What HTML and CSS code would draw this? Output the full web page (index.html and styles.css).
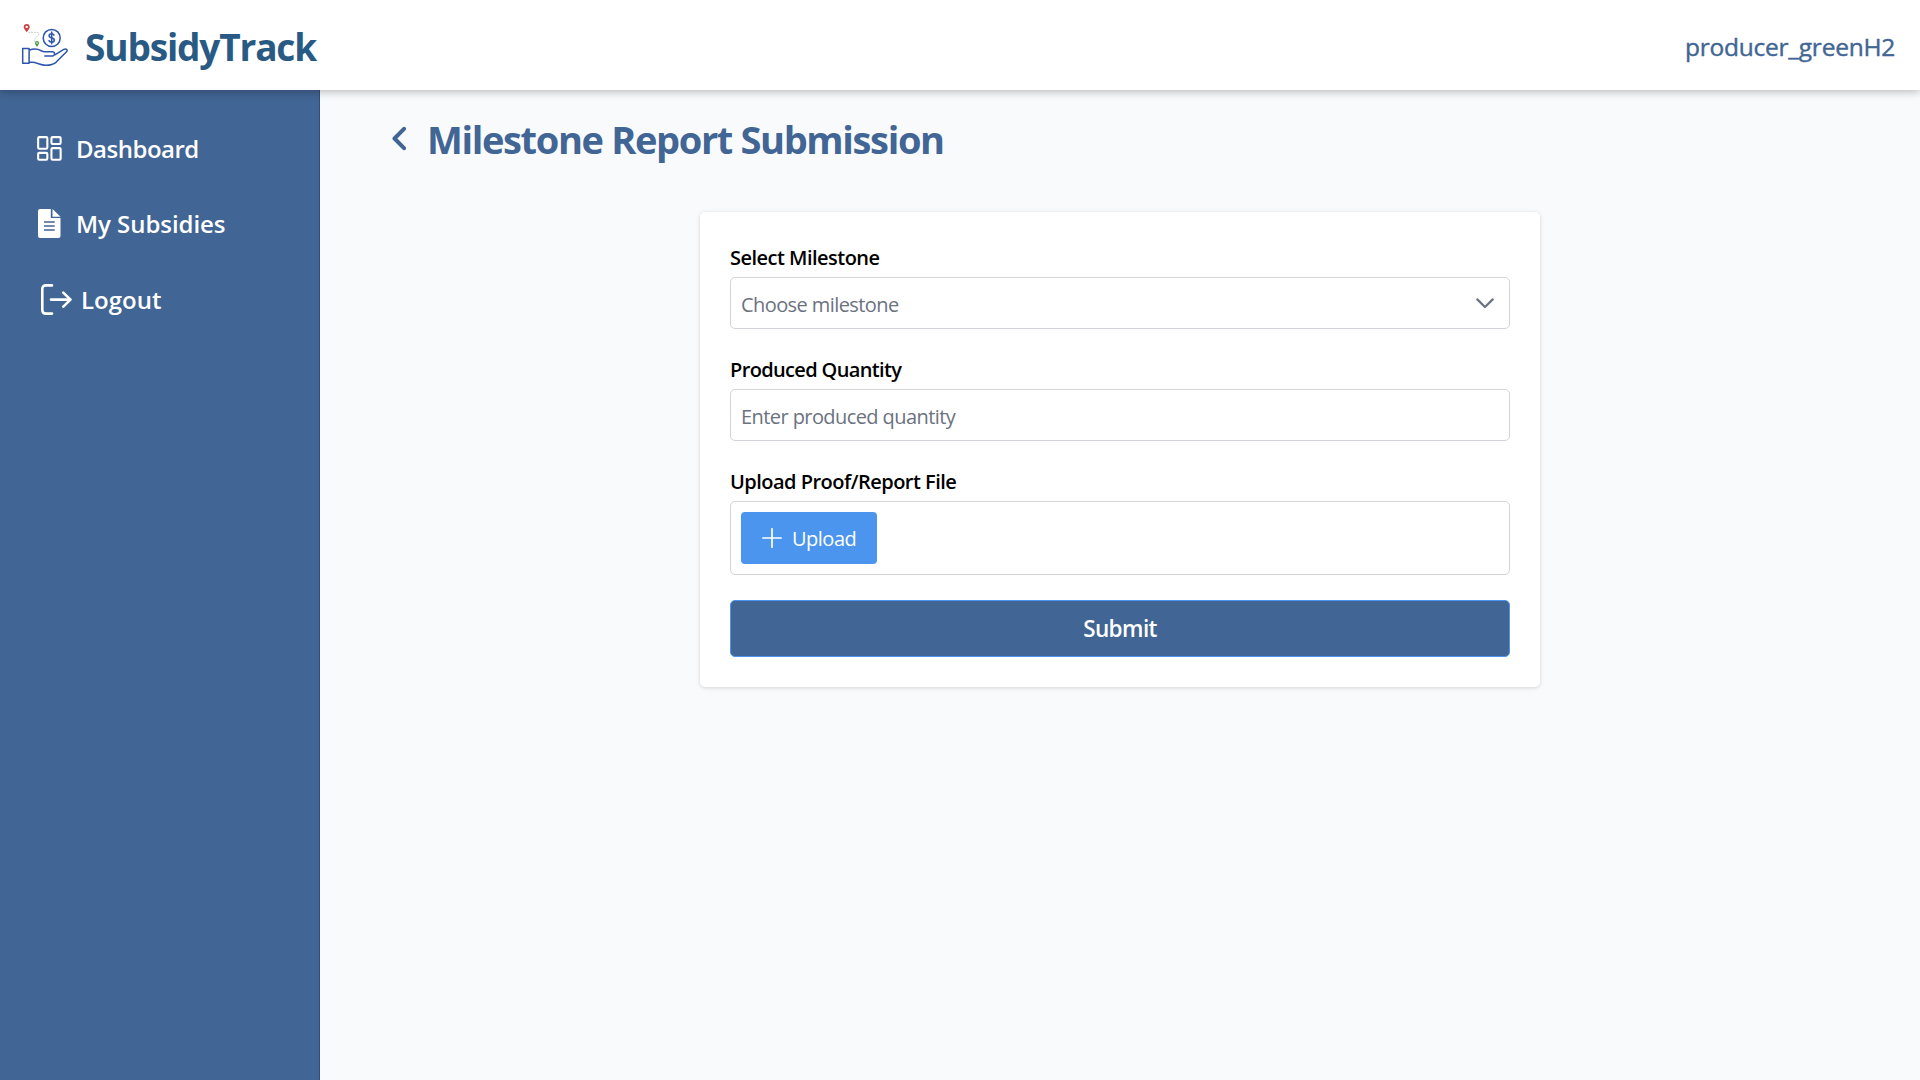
FILE: index.html
```html
<!DOCTYPE html>
<html lang="en">
<head>
<meta charset="utf-8">
<title>SubsidyTrack</title>
<link rel="stylesheet" href="styles.css">
</head>
<body>
<header class="topbar">
  <div class="brand">
    <svg class="logo" width="50" height="46" viewBox="20 22 50 46" fill="none">
      <path d="M28.5 32.4h8.2c2.5.2 2.6 1.400 1 3.200l-2.800 3.400c-1 1.600-.6 2.700 1 2.800" stroke="#aeb2b5" stroke-width=".7" stroke-dasharray="1.700 1"/>
      <path fill-rule="evenodd" d="M26.700 32.300c-2-2.700-3-3.700-3-5.200a3 3 0 0 1 6 0c0 1.500-1 2.500-3 5.200zM26.700 25.700a1.200 1.200 0 1 0 0 2.400 1.200 1.200 0 0 0 0-2.400z" fill="#cc4444"/>
      <path fill-rule="evenodd" d="M37 47c-1.400-2-2-2.800-2-3.900a2 2 0 0 1 4 0c0 1.100-.6 1.900-2 3.900zM37 42.300a.8.8 0 1 0 0 1.600.8.8 0 0 0 0-1.600z" fill="#419b35"/>
      <g stroke="#2c55ac" stroke-width="1.500" stroke-linecap="round" stroke-linejoin="round">
        <circle cx="51.700" cy="37.900" r="8.500"/>
        <path d="M54 35.200c-.5-1-1.300-1.500-2.400-1.500-1.500 0-2.500.8-2.500 2 0 1.300 1.100 1.800 2.500 2.100 1.500.4 2.700.9 2.700 2.300 0 1.300-1.100 2.100-2.700 2.100-1.300 0-2.200-.6-2.600-1.600M51.700 32.100v11.600"/>
        <path d="M22.700 48.500h6.400v14.800h-6.400zM29.100 50.200c3.500-1.400 6-1.700 9-.8 2.500.8 4 2.400 6.500 2.400h7.600c3 0 3.100 4.100.2 4.100h-7.600M55.300 54.600l8.500-5.200c2.600-1.200 4.500.8 2.500 2.600L56 62.300c-3.400 2.700-6.500 3-10.500 2.900-5-.1-9-2.900-13.500-2.900h-2.900"/>
      </g>
    </svg>
    <span class="brand-name">SubsidyTrack</span>
  </div>
  <span class="user">producer_greenH2</span>
</header>
<div class="shell">
  <nav class="sidebar">
    <a class="nav-item">
      <svg width="25" height="25" viewBox="0 0 25 25" fill="none" stroke="#fff" stroke-width="2.100"><rect x="1.150" y="1.150" width="9.200" height="11.600" rx="1.200"/><rect x="14.450" y="1.150" width="9.200" height="6.800" rx="1.200"/><rect x="1.150" y="16.900" width="9.200" height="6.800" rx="1.200"/><rect x="14.450" y="12.100" width="9.200" height="11.600" rx="1.200"/></svg>
      <span class="dashboard">Dashboard</span>
    </a>
    <a class="nav-item">
      <svg width="25" height="29" viewBox="0 0 25 29"><path fill="#fff" d="M3 0h10.800v9h9.700v18a2 2 0 0 1-2 2H3a2 2 0 0 1-2-2V2a2 2 0 0 1 2-2z"/><path fill="#fff" d="M15.500 0L23.500 7.700h-8z"/><path stroke="#416594" stroke-width="1.500" d="M7 13h10.700M7 17h10.700M7 21h10.700"/></svg>
      <span class="subsidies">My Subsidies</span>
    </a>
    <a class="nav-item logout">
      <svg width="31" height="31" viewBox="0 0 31 31" fill="none" stroke="#fff" stroke-width="2.600" stroke-linecap="round" stroke-linejoin="round"><path d="M11 1.400H5Q1.300 1.400 1.300 5.100v20.800Q1.300 29.600 5 29.600h6M10 15.600h19.500M22.300 8.600l7.200 7-7.200 7"/></svg>
      <span>Logout</span>
    </a>
  </nav>
  <main class="content">
    <div class="page-head">
      <svg width="16" height="25" viewBox="0 0 16 25" fill="none" stroke="#416594" stroke-width="4" stroke-linecap="round" stroke-linejoin="round"><path d="M13 2.800L3.500 12.500l9.500 9.700"/></svg>
      <h1 class="title">Milestone Report Submission</h1>
    </div>
    <form class="card">
      <div class="field">
        <label class="label">Select Milestone</label>
        <div class="control"><span class="placeholder">Choose milestone</span>
          <svg width="18" height="11" viewBox="0 0 18 11" fill="none" stroke="#6b7280" stroke-width="2.200" stroke-linecap="round" stroke-linejoin="round"><path d="M1.300 1.400L9 9l7.700-7.600"/></svg>
        </div>
      </div>
      <div class="field">
        <label class="label quantity">Produced Quantity</label>
        <div class="control"><span class="placeholder">Enter produced quantity</span></div>
      </div>
      <div class="field">
        <label class="label">Upload Proof/Report File</label>
        <div class="control upload-box">
          <button type="button" class="upload"><svg width="20" height="20" viewBox="0 0 20 20" stroke="#fff" stroke-width="1.700" stroke-linecap="round"><path d="M10 .8v18.400M.8 10h18.400"/></svg><span>Upload</span></button>
        </div>
      </div>
      <button type="button" class="submit">Submit</button>
    </form>
  </main>
</div>
</body>
</html>
```
FILE: styles.css
```css
* { box-sizing: border-box; }
body { margin: 0; height: 1080px; display: flex; flex-direction: column; overflow: hidden; background: #f9fafc; font-family: "Segoe UI", "Open Sans", "Noto Sans", sans-serif; font-size: 20px; }
.topbar { height: 90px; flex: none; display: flex; align-items: center; justify-content: space-between; padding: 0 25px 0 20px; background: #fff; box-shadow: 0 2px 8px rgba(0,0,0,.25); z-index: 1; }
.brand { display: flex; align-items: center; gap: 15px; }
.logo { display: block; margin-bottom: 1px; }
.brand-name { padding-top: 3px; font-size: 37px; font-weight: 700; letter-spacing: -1.15px; color: #285a84; line-height: 50px; }
.user { padding-top: 2px; font-size: 24.500px; font-weight: 500; letter-spacing: -.25px; -webkit-text-stroke: .4px #416594; color: #416594; }
.shell { flex: 1; display: flex; min-height: 0; }
.sidebar { width: 320px; flex: none; padding: 21px 0 0 37px; background: #416594; border-right: 1px solid #2f4f7c; }
.sidebar .dashboard { letter-spacing: -.5px; }
.sidebar .subsidies { letter-spacing: -.05px; }
.nav-item { height: 75px; display: flex; align-items: center; gap: 14px; color: #fff; font-size: 24px; font-weight: 600; }
.nav-item svg { flex: none; }
.nav-item.logout { height: 77px; padding-left: 4px; gap: 9px; }
.content { flex: 1; padding: 20px 60px; }
.page-head { height: 60px; display: flex; align-items: center; gap: 20px; padding-left: 11px; }
.page-head svg { margin-bottom: 3px; }
.title { margin: 0 0 2px; font-size: 38px; font-weight: 700; letter-spacing: -1.350px; color: #416594; line-height: 60px; }
.card { width: 840px; margin: 42px auto 0; padding: 30px; background: #fff; border-radius: 5px; box-shadow: 0 1px 4px rgba(0,0,0,.15); }
.field { margin-bottom: 25px; }
.label { display: block; height: 30px; line-height: 32px; margin-bottom: 5px; font-weight: 600; letter-spacing: -.52px; color: #000; }
.label.quantity { letter-spacing: -.65px; }
.control { height: 52px; display: flex; align-items: center; justify-content: space-between; padding: 0 15px 0 10px; border: 1px solid #d1d5db; border-radius: 5px; color: #6b7280; }
.placeholder { padding-top: 2px; letter-spacing: -.58px; }
.upload-box { height: 74px; }
.upload { height: 52px; width: 136px; display: flex; align-items: center; gap: 10px; padding: 0 0 0 21px; border: 0; border-radius: 4px; background: #4b95ef; color: #fff; font: inherit; letter-spacing: -.5px; }
.upload span { padding-top: 1px; }
.submit { width: 100%; height: 57px; display: block; border: 1px solid #4b95ef; border-radius: 5px; background: #416594; color: #fff; font: 600 22.500px "Segoe UI", "Open Sans", sans-serif; letter-spacing: -.6px; }
```
